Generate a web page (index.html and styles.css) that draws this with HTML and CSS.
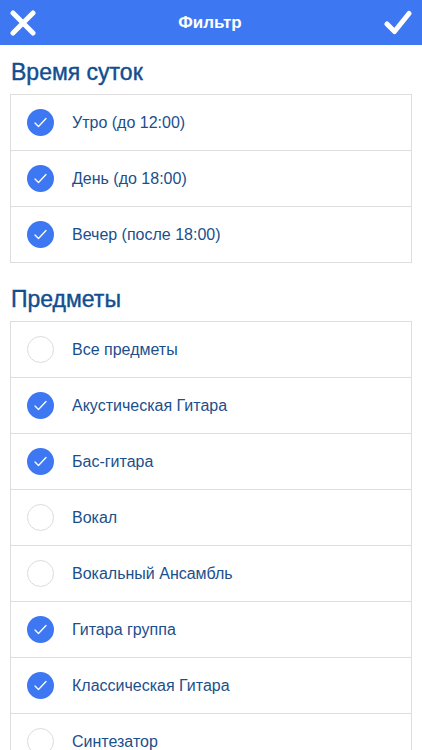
FILE: index.html
```html
<!DOCTYPE html>
<html lang="ru">
<head>
  <meta charset="UTF-8">
  <meta name="viewport" content="width=device-width, initial-scale=1.0">
  <title>Фильтр</title>
  <link rel="stylesheet" href="styles.css">
</head>
<body>
  <header class="topbar">
    <button class="bar-btn" aria-label="Закрыть">
      <svg width="26" height="26" viewBox="0 0 26 26"><path d="M3 3L23 23M23 3L3 23" stroke="#fff" stroke-width="5" stroke-linecap="round"/></svg>
    </button>
    <h1 class="bar-title">Фильтр</h1>
    <button class="bar-btn" aria-label="Готово">
      <svg width="28" height="26" viewBox="0 0 28 26"><path d="M3 14L10.5 21.5L25 3.5" fill="none" stroke="#fff" stroke-width="5" stroke-linecap="round" stroke-linejoin="round"/></svg>
    </button>
  </header>

  <h2 class="section-title">Время суток</h2>
  <ul class="list">
    <li class="row checked"><span class="mark"></span>Утро (до 12:00)</li>
    <li class="row checked"><span class="mark"></span>День (до 18:00)</li>
    <li class="row checked"><span class="mark"></span>Вечер (после 18:00)</li>
  </ul>

  <h2 class="section-title">Предметы</h2>
  <ul class="list">
    <li class="row"><span class="mark"></span>Все предметы</li>
    <li class="row checked"><span class="mark"></span>Акустическая Гитара</li>
    <li class="row checked"><span class="mark"></span>Бас-гитара</li>
    <li class="row"><span class="mark"></span>Вокал</li>
    <li class="row"><span class="mark"></span>Вокальный Ансамбль</li>
    <li class="row checked"><span class="mark"></span>Гитара группа</li>
    <li class="row checked"><span class="mark"></span>Классическая Гитара</li>
    <li class="row"><span class="mark"></span>Синтезатор</li>
  </ul>
</body>
</html>
```

FILE: styles.css
```css
body {
  margin: 0;
  font-family: "Liberation Sans", Arial, sans-serif;
  background: #fff;
  overflow: hidden;
}
.topbar {
  height: 45px;
  background: #3e77f2;
  display: flex;
  align-items: center;
  justify-content: space-between;
  padding: 0 10px;
}
.bar-btn {
  border: 0;
  background: none;
  padding: 0;
  display: flex;
}
.bar-title {
  margin: 0;
  color: #fff;
  font-size: 17px;
  font-weight: bold;
}
.section-title {
  margin: 13px 11px 8px;
  font-size: 23px;
  font-weight: normal;
  color: #124e8f;
  line-height: 28px;
  -webkit-text-stroke: 0.4px #124e8f;
}
.list {
  list-style: none;
  margin: 0 10px 22px;
  padding: 0;
  border: 1px solid #dedede;
}
.row {
  height: 55px;
  display: flex;
  align-items: center;
  gap: 18px;
  padding-left: 16px;
  font-size: 16px;
  color: #1b4f8c;
  border-top: 1px solid #dedede;
}
.row:first-child {
  border-top: 0;
}
.mark {
  width: 27px;
  height: 27px;
  border-radius: 50%;
  border: 1px solid #dcdcdc;
  box-sizing: border-box;
  flex-shrink: 0;
}
.checked .mark {
  border: 0;
  background: #3e77f2 url("data:image/svg+xml,%3Csvg xmlns='http://www.w3.org/2000/svg' width='28' height='28'%3E%3Cpath d='M8.5 14.5L12 18L19.5 10' fill='none' stroke='white' stroke-width='1.3' stroke-linecap='round' stroke-linejoin='round'/%3E%3C/svg%3E") center no-repeat;
}
```
